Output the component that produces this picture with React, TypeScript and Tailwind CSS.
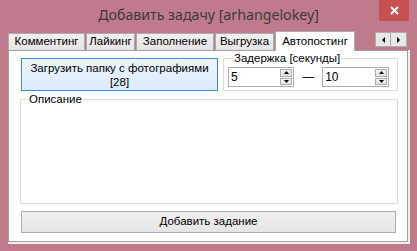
import React from 'react';

const Spin: React.FC<{ value: string; width: string }> = ({ value, width }) => {
  return (
    <div className={`flex h-[20px] shrink-0 ${width} border border-[#abadb3] bg-white`}>
      <div className="flex-1 pl-[2px] text-[12px] leading-[18px] text-black">{value}</div>
      <div className="mr-[1px] flex w-[12px] flex-col gap-[1px] py-[1px]">
        <div className="flex flex-1 items-center justify-center border border-[#acacac] bg-gradient-to-b from-[#f2f2f2] to-[#e2e2e2]">
          <svg width="5" height="3" viewBox="0 0 5 3">
            <path d="M0 3 L2.5 0 L5 3 Z" fill="#000" />
          </svg>
        </div>
        <div className="flex flex-1 items-center justify-center border border-[#acacac] bg-gradient-to-b from-[#f2f2f2] to-[#e2e2e2]">
          <svg width="5" height="3" viewBox="0 0 5 3">
            <path d="M0 0 L2.5 3 L5 0 Z" fill="#000" />
          </svg>
        </div>
      </div>
    </div>
  );
};

const tabs = [
  { label: 'Комментинг', w: 'w-[77px]' },
  { label: 'Лайкинг', w: 'w-[49px]' },
  { label: 'Заполнение', w: 'w-[78px]' },
  { label: 'Выгрузка', w: 'w-[59px]' },
];

export default function App() {
  return (
    <div
      className="flex h-[251px] w-[417px] flex-col bg-[#bf7a8c] text-[11.5px] text-black"
      style={{ fontFamily: '"Liberation Sans", Arial, sans-serif' }}
    >
      {/* title bar */}
      <div className="relative flex h-[31px] items-center justify-center">
        <div
          className="pb-[2px] text-[14.2px] text-[#3a3a3a]"
          style={{ fontFamily: '"Noto Sans", "Open Sans", sans-serif' }}
        >
          Добавить задачу [arhangelokey]
        </div>
        <div className="absolute right-[8px] top-0 flex h-[21px] w-[30px] items-center justify-center bg-[#c75050]">
          <svg width="9" height="9" viewBox="0 0 9 9">
            <path d="M1 1 L8 8 M8 1 L1 8" stroke="#fff" strokeWidth="2" />
          </svg>
        </div>
      </div>

      {/* tab strip */}
      <div className="flex h-[19px] items-end pl-[8px] pr-[10px]">
        {tabs.map((t) => (
          <div
            key={t.label}
            className={`mr-[1px] flex h-[17px] ${t.w} items-center justify-center whitespace-nowrap border border-b-0 border-[#acacac] bg-gradient-to-b from-[#f0f0f0] to-[#e5e5e5] leading-none`}
          >
            {t.label}
          </div>
        ))}
        <div className="relative z-10 -mb-px flex h-[20px] w-[80px] items-center justify-center whitespace-nowrap border border-b-0 border-[#acacac] bg-white leading-none">
          Автопостинг
        </div>
        <div className="mb-[3px] ml-auto flex">
          <div className="flex h-[15px] w-[16px] items-center justify-center border border-[#acacac] bg-[#e8e8e8]">
            <svg width="3" height="6" viewBox="0 0 3 6">
              <path d="M3 0 L0 3 L3 6 Z" fill="#000" />
            </svg>
          </div>
          <div className="flex h-[15px] w-[16px] items-center justify-center border border-l-0 border-[#acacac] bg-[#e8e8e8]">
            <svg width="3" height="6" viewBox="0 0 3 6">
              <path d="M0 0 L3 3 L0 6 Z" fill="#000" />
            </svg>
          </div>
        </div>
      </div>

      {/* tab page */}
      <div className="ml-[8px] mr-[7px] flex flex-col bg-[#f0f0f0] pb-[2px] pr-[2px]">
        <div className="flex h-[192px] flex-col border border-[#a0a0a0] bg-white pl-[11px] pr-[9px]">
          <div className="flex items-start">
            <div className="ml-[1px] mt-[7px] flex h-[33px] w-[197px] flex-col items-center justify-center border border-[#3c8fe0] bg-gradient-to-b from-[#ecf4fc] to-[#dcecfc] leading-[14px]">
              <span className="whitespace-nowrap">Загрузить папку с фотографиями</span>
              <span>[28]</span>
            </div>
            <fieldset className="ml-auto w-[175px] border border-[#dcdcdc] pb-[3px] pl-[4px] pr-[5px]">
              <legend className="ml-[5px] px-[1px] leading-[14px]">Задержка [секунды]</legend>
              <div className="mt-[2px] flex items-center">
                <Spin value="5" width="w-[66px]" />
                <div className="ml-[8px] mr-[9px] whitespace-nowrap leading-none tracking-[-1.6px]">-----</div>
                <Spin value="10" width="w-[67px]" />
              </div>
            </fieldset>
          </div>
          <fieldset className="mt-[1px] h-[112px] border border-[#dcdcdc]">
            <legend className="ml-[7px] px-[1px] leading-[14px]">Описание</legend>
          </fieldset>
          <div className="ml-[1px] mr-[2px] mt-[7px] flex h-[22px] items-center justify-center border border-[#adadad] bg-gradient-to-b from-[#f0f0f0] to-[#e5e5e5]">
            Добавить задание
          </div>
        </div>
      </div>
    </div>
  );
}
